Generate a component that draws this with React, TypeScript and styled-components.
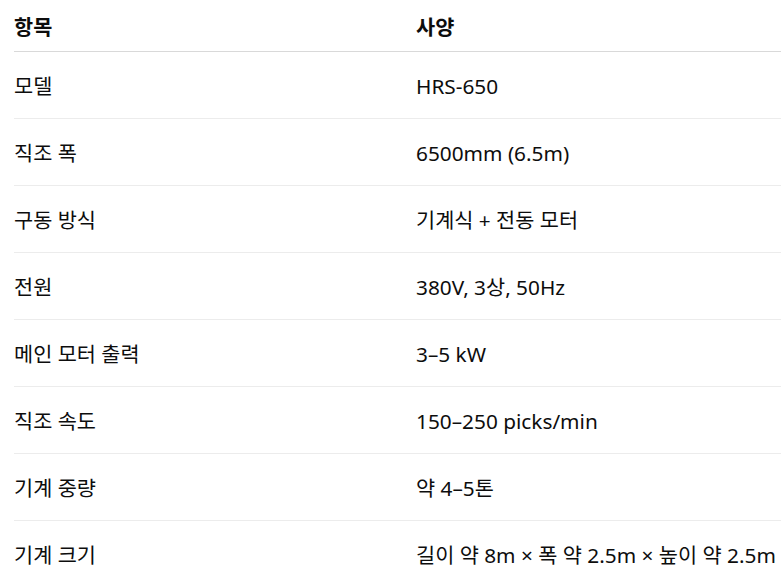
import React from "react";
import styled, { createGlobalStyle } from "styled-components";

const Global = createGlobalStyle`
  html, body { margin: 0; padding: 0; background: #ffffff; }
  body { font-family: "Noto Sans", "Noto Sans CJK KR", sans-serif; color: #0d0d0d; }
`;

const Wrap = styled.div`
  padding: 0 0 0 14px;
  overflow: hidden;
`;

const Table = styled.table`
  border-collapse: collapse;
  width: 767px;
  table-layout: fixed;
  font-size: 20.8px;
  line-height: 26px;
`;

const HeadCell = styled.th<{ $first?: boolean }>`
  text-align: left;
  font-weight: 700;
  padding: 14px 0 11px 0;
  width: ${(p) => (p.$first ? "402px" : "auto")};
  border-bottom: 1px solid #d9d9d9;
`;

const Row = styled.tr<{ $last?: boolean }>`
  border-bottom: ${(p) => (p.$last ? "none" : "1px solid #ececec")};
`;

const Cell = styled.td`
  padding: 21px 0 19px 0;
  white-space: nowrap;
  font-weight: 400;
`;

const rows: [string, string][] = [
  ["모델", "HRS-650"],
  ["직조 폭", "6500mm (6.5m)"],
  ["구동 방식", "기계식 + 전동 모터"],
  ["전원", "380V, 3상, 50Hz"],
  ["메인 모터 출력", "3–5 kW"],
  ["직조 속도", "150–250 picks/min"],
  ["기계 중량", "약 4–5톤"],
  ["기계 크기", "길이 약 8m × 폭 약 2.5m × 높이 약 2.5m"],
];

export default function App() {
  return (
    <>
      <Global />
      <Wrap>
        <Table>
          <thead>
            <tr>
              <HeadCell $first>항목</HeadCell>
              <HeadCell>사양</HeadCell>
            </tr>
          </thead>
          <tbody>
            {rows.map(([k, v], i) => (
              <Row key={k} $last={i === rows.length - 1}>
                <Cell>{k}</Cell>
                <Cell>{v}</Cell>
              </Row>
            ))}
          </tbody>
        </Table>
      </Wrap>
    </>
  );
}
